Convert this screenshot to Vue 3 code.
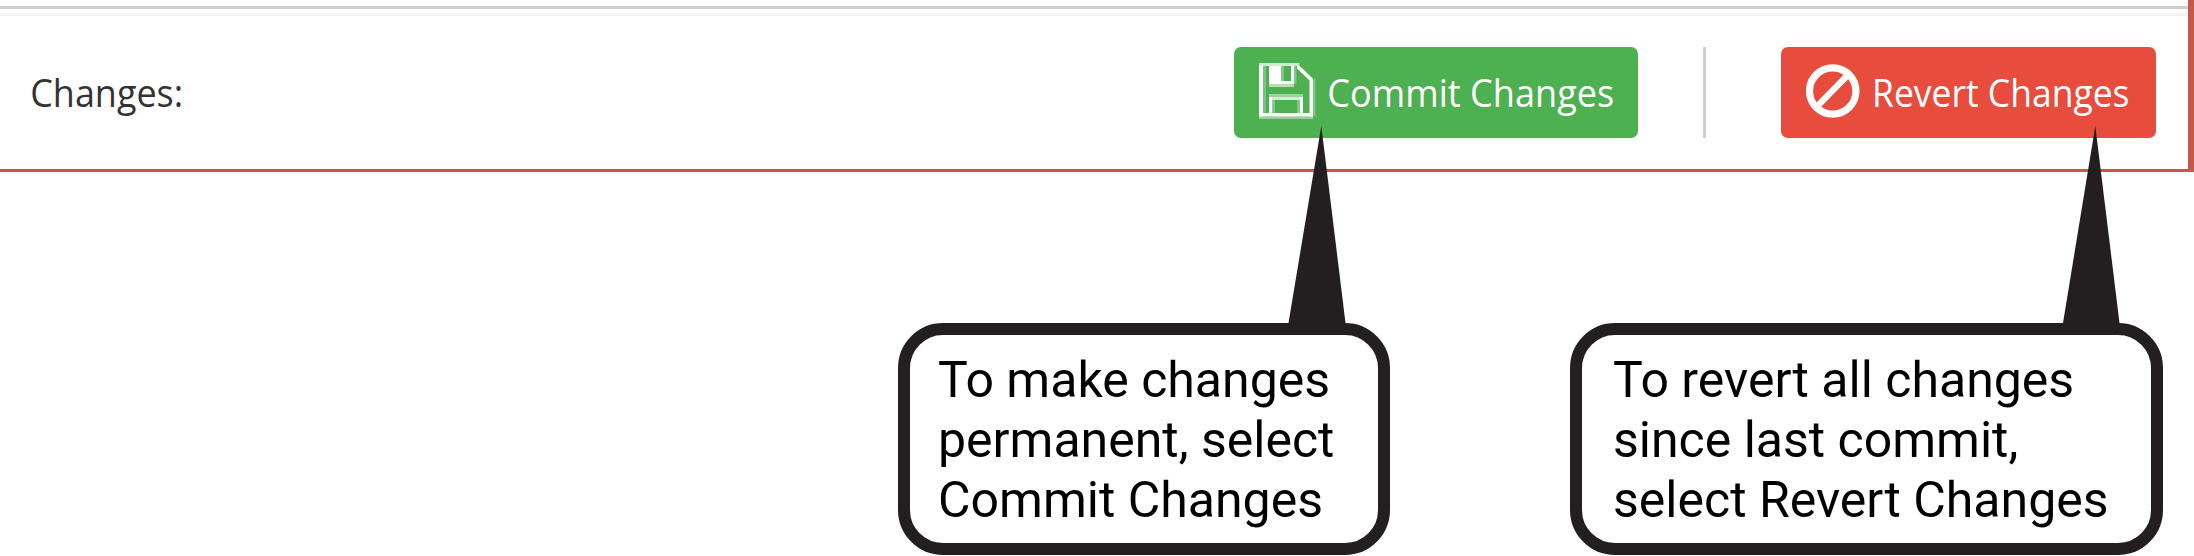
<script setup>
const callouts = [
  { id: 'commit', lines: ['To make changes', 'permanent, select', 'Commit Changes'], tail: '390.5,197 423.3,0 447.5,197' },
  { id: 'revert', lines: ['To revert all changes', 'since last commit,', 'select Revert Changes'], tail: '493,197 525.3,0 549.5,197' },
]
</script>

<template>
  <main class="page">
    <section class="panel">
      <div class="rule"></div>
      <div class="bar">
        <svg class="caption" width="160" height="91" role="img">
          <text x="2.2" y="59.5" textLength="153" lengthAdjust="spacingAndGlyphs">Changes:</text>
        </svg>
        <div class="actions">
          <button class="btn commit">
            <svg class="icon" width="57" height="57" viewBox="0 0 57 57" fill="#fff">
              <rect x="0" y="0" width="40.5" height="3" opacity=".74" />
              <rect x="0" y="3" width="4" height="50.5" />
              <rect x="4" y="3" width="3" height="47" opacity=".25" />
              <path d="M38 3h2.8L54 15.8V53.5h-3.5V17.5L38 5.5z" />
              <rect x="54" y="16" width="2.5" height="37.5" opacity=".27" />
              <rect x="0" y="50" width="54" height="3.5" />
              <rect x="0" y="53.5" width="54" height="2.5" opacity=".42" />
              <path d="M10 3h12v15h10V3h3v18H10z" />
              <rect x="22" y="3" width="3" height="15" opacity=".3" />
              <rect x="35" y="3" width="2.5" height="18" opacity=".3" />
              <rect x="10" y="21" width="25" height="3" opacity=".6" />
              <rect x="10" y="31" width="34" height="3" opacity=".45" />
              <rect x="10" y="34" width="34" height="3" opacity=".76" />
              <rect x="10" y="34" width="3.2" height="16" />
              <rect x="13.2" y="37" width="2.8" height="13" opacity=".3" />
              <rect x="41" y="34" width="3" height="16" />
              <rect x="38" y="37" width="3" height="13" opacity=".3" />
            </svg>
            <svg class="label" width="294" height="91">
              <text x="1.3" y="59.5" textLength="287" lengthAdjust="spacingAndGlyphs">Commit Changes</text>
            </svg>
          </button>
          <span class="divider"></span>
          <button class="btn revert">
            <svg class="icon" width="57" height="57" viewBox="0 0 57 57" fill="none" stroke="#fff">
              <circle cx="26.7" cy="28" r="23.2" stroke-width="7.2" />
              <path d="M11 43.5L42.3 11.5" stroke-width="6.3" />
            </svg>
            <svg class="label" width="264" height="91">
              <text x="1" y="59.5" textLength="257.5" lengthAdjust="spacingAndGlyphs">Revert Changes</text>
            </svg>
          </button>
        </div>
      </div>
    </section>

    <aside v-for="c in callouts" :key="c.id" class="callout" :class="'to-' + c.id">
      <svg class="tail" width="594" height="200"><polygon :points="c.tail" fill="#231f20" /></svg>
      <p><span v-for="line in c.lines" :key="line">{{ line }}</span></p>
    </aside>
  </main>
</template>

<style>
html, body { margin: 0; background: #fff; overflow: hidden; }
</style>

<style scoped>
.page { position: relative; width: 2194px; height: 556px; overflow: hidden; background: #fff; }
.panel { box-sizing: border-box; height: 172px; padding-top: 6px; border-right: 6px solid #c4594a; border-bottom: 3px solid #c4594a; }
.rule { box-sizing: border-box; height: 10px; border-top: 3px solid #cecece; border-bottom: 3px solid #f3f3f3; background: #fcfcfc; }
.bar { display: flex; justify-content: space-between; align-items: flex-start; padding: 31px 32px 0 28px; }
.actions { display: flex; height: 91px; }
.btn { box-sizing: border-box; display: flex; align-items: flex-start; height: 91px; padding: 0 0 0 25px; border: 0; border-radius: 7px; }
.commit { width: 404px; background: #4db051; }
.revert { width: 375px; background: #e84c3d; }
.icon { flex: none; margin-top: 16px; }
.label { flex: none; margin-left: 10px; overflow: visible; }
.revert .label { margin-left: 7.5px; }
.label text, .caption text { font: 39px "Open Sans", "Noto Sans", sans-serif; }
.label text { fill: #fff; }
.caption text { fill: #333; }
.caption { overflow: visible; }
.divider { width: 3px; margin: 0 75px 0 65px; background: #cecece; }
.callout { position: absolute; top: 323px; box-sizing: border-box; height: 232px; border: 12px solid #231f20; border-radius: 45px; background: #fff; }
.to-commit { left: 898px; width: 492px; padding-left: 28px; }
.to-revert { left: 1569.7px; width: 593.5px; padding-left: 31.3px; }
.tail { position: absolute; left: -12px; top: -209px; overflow: visible; }
.callout p { margin: 15px 0 0; font: 50px/60px Roboto, sans-serif; color: #000; white-space: nowrap; }
.callout span { display: block; }
</style>
